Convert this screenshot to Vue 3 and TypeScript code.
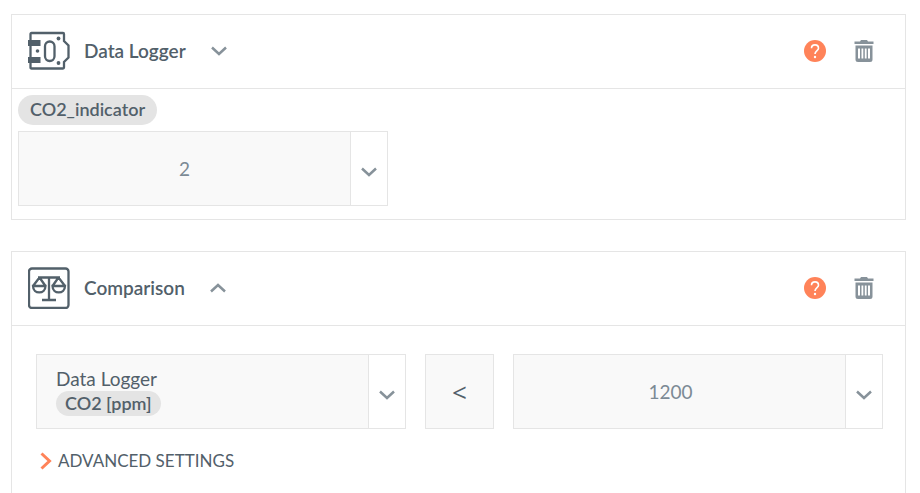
<script setup lang="ts">
import { ref } from 'vue'

type BlockKind = 'logger' | 'comparison'

interface Block {
  id: BlockKind
  title: string
  expanded: boolean
}

const blocks = ref<Block[]>([
  { id: 'logger', title: 'Data Logger', expanded: false },
  { id: 'comparison', title: 'Comparison', expanded: true },
])

const indicator = ref('2')
const threshold = ref('1200')

const operators = ['<', '>', '=']
const operatorIndex = ref(0)

function nextOperator(): void {
  operatorIndex.value = (operatorIndex.value + 1) % operators.length
}
</script>

<template>
  <main class="blocks">
    <section v-for="block in blocks" :key="block.id" class="card" :class="block.id">
      <header class="card-header">
        <svg v-if="block.id === 'logger'" class="block-icon" viewBox="0 0 42 42" aria-hidden="true">
          <path
            d="M2.500 10V4Q2.500 3 3.500 3H35Q36 3 36 4V11L40.500 15.500V27.500L36 32V37.500Q36 38.500 35 38.500H3.500Q2.500 38.500 2.500 37.500V10"
            class="line"
          />
          <path d="M0 10H12.500V16H0ZM0 27H12.500V33H0Z" class="solid" />
          <rect x="17" y="11.500" width="9.500" height="19.500" rx="4.700" class="line" />
          <circle cx="9.500" cy="21" r="1.800" class="solid" />
          <circle cx="30.500" cy="8.500" r="1.900" class="solid" />
          <circle cx="30.500" cy="33" r="1.900" class="solid" />
        </svg>
        <svg v-else class="block-icon" viewBox="0 0 42 42" aria-hidden="true">
          <rect x="1" y="1.500" width="39.500" height="39.500" rx="3" class="line" />
          <path
            d="M10 10.500H32M21 10.500V33M14 33H28M11.500 10.500L5 19M11.500 10.500L17.500 19M30.500 10.500L24.500 19M30.500 10.500L37 19M5 19H17.500C17.500 27.500 5 27.500 5 19ZM24.500 19H37C37 27.500 24.500 27.500 24.500 19Z"
            class="line"
          />
        </svg>
        <h2 class="title">{{ block.title }}</h2>
        <button
          type="button"
          class="icon-button"
          :aria-expanded="block.expanded"
          :aria-label="`Toggle ${block.title}`"
          @click="block.expanded = !block.expanded"
        >
          <svg class="chevron" :class="{ up: block.expanded }" viewBox="0 0 16 10" aria-hidden="true">
            <path d="M1 1.500L8 8L15 1.500" />
          </svg>
        </button>
        <div class="actions">
          <button type="button" class="icon-button" :aria-label="`Help for ${block.title}`">
            <svg class="help" viewBox="0 0 22 22" aria-hidden="true">
              <circle cx="11" cy="11" r="11" fill="#ff8359" />
              <path
                d="M7.500 8.200C7.500 3.800 14.500 3.800 14.500 8.200C14.500 10.500 11 10.700 11 14"
                fill="none"
                stroke="#fff"
                stroke-width="1.600"
              />
              <circle cx="11" cy="17" r="1.200" fill="#fff" />
            </svg>
          </button>
          <button type="button" class="icon-button" :aria-label="`Delete ${block.title}`">
            <svg class="trash" viewBox="0 0 20 22" aria-hidden="true">
              <path
                fill-rule="evenodd"
                d="M0.500 1.500H6L7 0H13L14 1.500H19.500V4H0.500ZM1.500 5.500H18.500V19.500Q18.500 22 16 22H4Q1.500 22 1.500 19.500ZM4 8.500V18.500H6V8.500ZM7.500 8.500V18.500H9.300V8.500ZM10.800 8.500V18.500H12.600V8.500ZM14 8.500V18.500H16V8.500Z"
              />
            </svg>
          </button>
        </div>
      </header>

      <div v-if="block.id === 'logger'" class="logger-body">
        <label class="pill" for="indicator">CO2_indicator</label>
        <div class="combo">
          <input id="indicator" v-model="indicator" class="value" type="text" />
          <button type="button" class="drop" aria-label="Indicator options">
            <svg class="chevron" viewBox="0 0 16 10" aria-hidden="true"><path d="M1 1.500L8 8L15 1.500" /></svg>
          </button>
        </div>
      </div>

      <div v-else class="comparison-body">
        <div class="expression">
          <div class="combo">
            <button type="button" class="source">
              <span>Data Logger</span>
              <span class="pill small">CO2 [ppm]</span>
            </button>
            <button type="button" class="drop" aria-label="Source options">
              <svg class="chevron" viewBox="0 0 16 10" aria-hidden="true"><path d="M1 1.500L8 8L15 1.500" /></svg>
            </button>
          </div>
          <button type="button" class="operator" aria-label="Operator" @click="nextOperator">
            {{ operators[operatorIndex] }}
          </button>
          <div class="combo">
            <input v-model="threshold" class="value offset" type="text" aria-label="Threshold" />
            <button type="button" class="drop" aria-label="Threshold options">
              <svg class="chevron" viewBox="0 0 16 10" aria-hidden="true"><path d="M1 1.500L8 8L15 1.500" /></svg>
            </button>
          </div>
        </div>
        <button type="button" class="advanced">
          <svg class="arrow" viewBox="0 0 12 18" aria-hidden="true"><path d="M1.500 1.500L9.500 9L1.500 16.500" /></svg>
          <span>ADVANCED SETTINGS</span>
        </button>
      </div>
    </section>
  </main>
</template>

<style>
body {
  margin: 0;
  background: #fff;
}

html {
  overflow: hidden;
}
</style>

<style scoped>
.blocks {
  display: flex;
  flex-direction: column;
  gap: 31px;
  padding: 14px 14px 0 11px;
  color: #52606a;
  font-family: Lato, "Liberation Sans", sans-serif;
  font-size: 19px;
  line-height: 24px;
}

.card {
  border: 1px solid #e5e5e5;
}

.card-header {
  display: flex;
  align-items: center;
  height: 71px;
  padding: 0 31px 2px 16px;
  border-bottom: 1px solid #e5e5e5;
}

.comparison .card-header {
  height: 72px;
  padding-bottom: 1px;
}

.block-icon {
  width: 42px;
  height: 42px;
}

.line {
  fill: none;
  stroke: #52606a;
  stroke-width: 2.3;
}

.solid {
  fill: #52606a;
}

.title {
  margin: 0 25px 0 14px;
  font-size: 19px;
  font-weight: 600;
}

button {
  padding: 0;
  border: 0;
  background: none;
  color: inherit;
  font: inherit;
  cursor: pointer;
}

.icon-button {
  display: flex;
}

.chevron {
  display: block;
  width: 16px;
  height: 10px;
}

.chevron path {
  fill: none;
  stroke: #87929a;
  stroke-width: 2.5;
}

.chevron.up {
  transform: rotate(180deg);
}

.actions {
  display: flex;
  align-items: center;
  gap: 28px;
  margin-left: auto;
}

.help {
  width: 22px;
  height: 22px;
}

.trash {
  width: 20px;
  height: 22px;
  fill: #87929a;
}

.logger-body {
  display: flex;
  flex-direction: column;
  align-items: flex-start;
  gap: 6px;
  padding: 6px 6px 13px;
}

.logger-body .combo {
  width: 100%;
  max-width: 370px;
}

.pill {
  padding: 2px 12px 4px;
  border-radius: 15px;
  background: #e4e4e4;
  font-size: 18px;
  font-weight: 600;
}

.pill.small {
  padding: 0 9px 1px;
}

.combo {
  display: flex;
  box-sizing: border-box;
  min-width: 0;
  height: 75px;
  border: 1px solid #e5e5e5;
}

.value,
.source {
  box-sizing: border-box;
  flex: 1;
  min-width: 0;
  border: 0;
  background: #f9f9f9;
}

.value {
  padding: 0;
  color: #7c8a95;
  font: inherit;
  text-align: center;
}

.value.offset {
  padding-right: 18px;
}

.source {
  display: flex;
  flex-direction: column;
  align-items: flex-start;
  justify-content: center;
  padding-left: 19px;
}

.drop {
  display: flex;
  align-items: center;
  justify-content: center;
  width: 37px;
  padding-top: 6px;
  border-left: 1px solid #e5e5e5;
}

.comparison-body {
  padding: 28px 22px 28px 24px;
}

.expression {
  display: grid;
  grid-template-columns: 1fr 69px 1fr;
  gap: 19px;
}

.operator {
  border: 1px solid #e5e5e5;
  background: #f9f9f9;
  font-family: "Open Sans", "Liberation Sans", sans-serif;
  font-size: 26px;
  font-weight: 500;
}

.advanced {
  display: flex;
  align-items: center;
  gap: 6px;
  margin: 20px 0 0 4px;
  font-size: 17px;
}

.arrow {
  width: 12px;
  height: 18px;
}

.arrow path {
  fill: none;
  stroke: #ff8359;
  stroke-width: 3;
}
</style>
